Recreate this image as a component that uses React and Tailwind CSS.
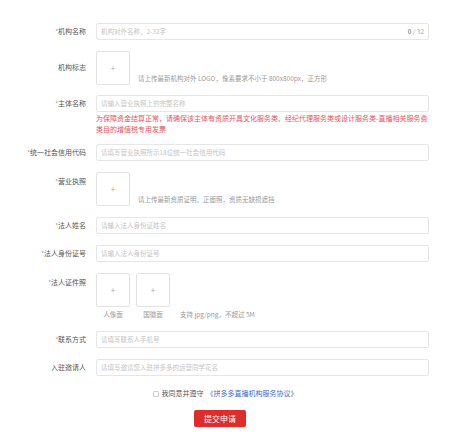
import React from "react";

const FONT = { fontFamily: '"Noto Sans CJK SC", "Noto Sans", sans-serif' };

const Label = ({ children, required = true }) => (
  <div className="w-[86px] shrink-0 text-right text-[7px] leading-[17px] text-[#555]">
    {required && <span className="text-[#999] text-[6px] align-top">*</span>}
    {children}
  </div>
);

const TextInput = ({ placeholder, counter }) => (
  <div className="flex h-[17px] w-[333px] items-center justify-between rounded-[2px] border border-[#e6e6e6] bg-white px-[4px]">
    <span className="text-[6.5px] text-[#c4c4c4]">{placeholder}</span>
    {counter && (
      <span className="text-[6.5px] text-[#aaa]">
        <span className="text-[#555]">0</span> / 32
      </span>
    )}
  </div>
);

const UploadBox = () => (
  <div className="flex h-[34px] w-[34px] shrink-0 items-center justify-center rounded-[2px] border border-[#e3e3e3] bg-white text-[8px] leading-none text-[#aaa]">
    +
  </div>
);

export default function App() {
  return (
    <div className="min-h-[440px] w-[456px] bg-white pt-[23px]" style={FONT}>
      {/* 机构名称 */}
      <div className="flex gap-[10px]">
        <Label>机构名称</Label>
        <TextInput placeholder="机构对外名称，2-32字" counter />
      </div>

      {/* 机构标志 */}
      <div className="mt-[11px] flex gap-[10px]">
        <div className="pt-[8px]">
          <Label required={false}>机构标志</Label>
        </div>
        <div className="flex items-end gap-[8px]">
          <UploadBox />
          <span className="mb-[1px] text-[6.5px] text-[#999]">
            请上传最新机构对外 LOGO，像素要求不小于 800x800px，正方形
          </span>
        </div>
      </div>

      {/* 主体名称 */}
      <div className="mt-[10px] flex gap-[10px]">
        <Label>主体名称</Label>
        <div className="w-[333px]">
          <TextInput placeholder="请输入营业执照上的完整名称" />
          <p className="mt-[1px] text-[7px] leading-[11px] text-[#e4535e]">
            为保障资金结算正常，请确保该主体有资质开具文化服务类、经纪代理服务类或设计服务类-直播相关服务费类目的增值税专用发票
          </p>
        </div>
      </div>

      {/* 统一社会信用代码 */}
      <div className="mt-[9px] flex gap-[10px]">
        <Label>统一社会信用代码</Label>
        <TextInput placeholder="请填写营业执照所示18位统一社会信用代码" />
      </div>

      {/* 营业执照 */}
      <div className="mt-[11px] flex gap-[10px]">
        <div className="pt-[1px]">
          <Label>营业执照</Label>
        </div>
        <div className="flex items-end gap-[8px]">
          <UploadBox />
          <span className="mb-[1px] text-[6.5px] text-[#999]">
            请上传最新资质证明，正面照，资质无缺损遮挡
          </span>
        </div>
      </div>

      {/* 法人姓名 */}
      <div className="mt-[11px] flex gap-[10px]">
        <Label>法人姓名</Label>
        <TextInput placeholder="请输入法人身份证姓名" />
      </div>

      {/* 法人身份证号 */}
      <div className="mt-[11px] flex gap-[10px]">
        <Label>法人身份证号</Label>
        <TextInput placeholder="请输入法人身份证号" />
      </div>

      {/* 法人证件照 */}
      <div className="mt-[11px] flex gap-[10px]">
        <div className="pt-[1px]">
          <Label>法人证件照</Label>
        </div>
        <div>
          <div className="flex gap-[6px]">
            <UploadBox />
            <UploadBox />
          </div>
          <div className="mt-[2px] flex text-[6.5px] leading-[11px] text-[#999]">
            <span className="w-[34px] text-center">人像面</span>
            <span className="ml-[6px] w-[34px] text-center">国徽面</span>
            <span className="ml-[10px]">支持 jpg/png，不超过 5M</span>
          </div>
        </div>
      </div>

      {/* 联系方式 */}
      <div className="mt-[11px] flex gap-[10px]">
        <Label>联系方式</Label>
        <TextInput placeholder="请填写联系人手机号" />
      </div>

      {/* 入驻邀请人 */}
      <div className="mt-[11px] flex gap-[10px]">
        <Label required={false}>入驻邀请人</Label>
        <TextInput placeholder="请填写邀请您入驻拼多多的运营同学花名" />
      </div>

      {/* 协议 */}
      <div className="mt-[12px] flex items-center justify-center gap-[3px] pr-[6px] text-[7px] leading-[11px]">
        <span className="h-[6px] w-[6px] rounded-[1px] border border-[#ccc] bg-white" />
        <span className="text-[#555]">我同意并遵守</span>
        <span className="text-[#3b6cc4]">《拼多多直播机构服务协议》</span>
      </div>

      <div className="mt-[11px] flex justify-center pr-[16px]">
        <button className="h-[17px] w-[52px] rounded-[2px] bg-[#dd2c2a] text-[8px] text-white">
          提交申请
        </button>
      </div>
    </div>
  );
}
